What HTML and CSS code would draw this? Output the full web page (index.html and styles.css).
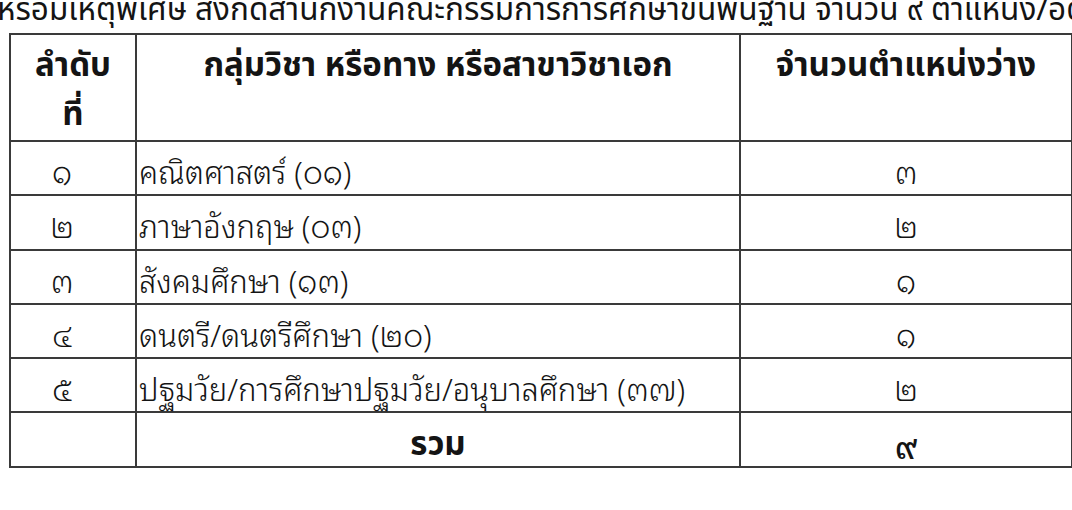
FILE: index.html
```html
<!DOCTYPE html>
<html lang="th">
<head>
<meta charset="utf-8">
<link rel="stylesheet" href="styles.css">
</head>
<body>
<div class="page">
  <div class="title">หรือมีเหตุพิเศษ สังกัดสำนักงานคณะกรรมการการศึกษาขั้นพื้นฐาน จำนวน ๙ ตำแหน่ง/อัตรา</div>
  <table class="grid">
    <colgroup>
      <col class="c1"><col class="c2"><col class="c3">
    </colgroup>
    <thead>
      <tr class="head">
        <th>ลำดับ<br>ที่</th>
        <th>กลุ่มวิชา หรือทาง หรือสาขาวิชาเอก</th>
        <th>จำนวนตำแหน่งว่าง</th>
      </tr>
    </thead>
    <tbody>
      <tr><td class="idx">๑</td><td class="name">คณิตศาสตร์ (๐๑)</td><td class="num">๓</td></tr>
      <tr><td class="idx">๒</td><td class="name">ภาษาอังกฤษ (๐๓)</td><td class="num">๒</td></tr>
      <tr><td class="idx">๓</td><td class="name">สังคมศึกษา (๑๓)</td><td class="num">๑</td></tr>
      <tr><td class="idx">๔</td><td class="name">ดนตรี/ดนตรีศึกษา (๒๐)</td><td class="num">๑</td></tr>
      <tr><td class="idx">๕</td><td class="name">ปฐมวัย/การศึกษาปฐมวัย/อนุบาลศึกษา (๓๗)</td><td class="num">๒</td></tr>
      <tr class="total"><td></td><td class="sum">รวม</td><td class="num strong">๙</td></tr>
    </tbody>
  </table>
</div>
</body>
</html>
```
FILE: styles.css
```css
html, body {
  margin: 0;
  padding: 0;
  background: #ffffff;
}
.page {
  width: 1072px;
  height: 510px;
  overflow: hidden;
  color: #141414;
  font-family: "Noto Sans Thai", "Noto Sans", "DejaVu Sans", sans-serif;
}
.title {
  white-space: nowrap;
  font-size: 31.5px;
  line-height: 40px;
  height: 42px;
  margin-top: -9px;
  margin-left: -3px;
}
.grid {
  margin-left: 9px;
  width: 1062px;
  border-collapse: collapse;
  table-layout: fixed;
}
.c1 { width: 126px; }
.c2 { width: 604px; }
.c3 { width: 332px; }
.grid th, .grid td {
  border: 2px solid #3a3a3a;
  padding: 0;
}
.head th {
  height: 90px;
  vertical-align: top;
  font-weight: bold;
  font-size: 33px;
  line-height: 49px;
  padding-top: 7px;
}
.grid td {
  height: 48.3px;
  padding-top: 4px;
  vertical-align: middle;
  font-family: "Noto Sans Thai Looped", "Noto Sans Thai", "Noto Sans", sans-serif;
  font-weight: 300;
  font-size: 31px;
  line-height: 40px;
}
.grid td.idx { text-align: center; padding-right: 22px; }
.grid td.num { text-align: center; }
.grid td.name { padding-left: 2px; text-align: left; }
.grid .total td {
  height: 42.3px;
  padding-top: 10px;
}
.grid td.strong { font-weight: 500; }
.grid td.sum {
  text-align: center;
  font-family: "Noto Sans Thai", "Noto Sans", sans-serif;
  font-weight: bold;
  font-size: 33px;
}
```
